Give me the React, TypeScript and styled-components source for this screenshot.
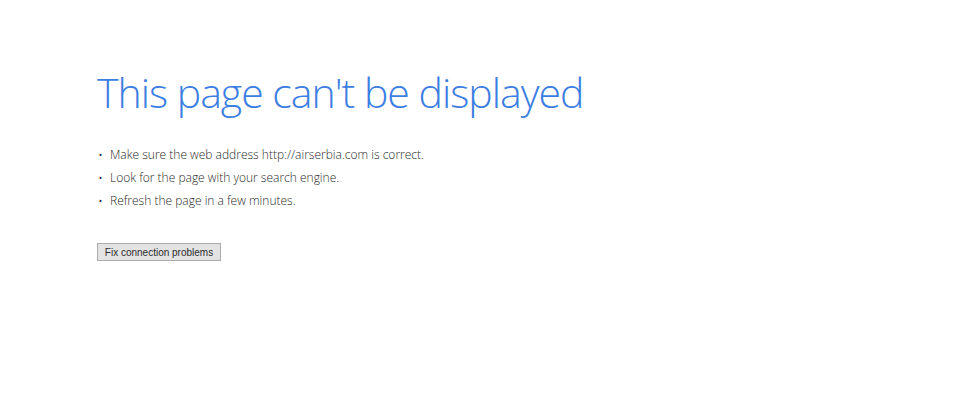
import React from "react";
import styled, { createGlobalStyle } from "styled-components";

const Global = createGlobalStyle`
  html, body { margin: 0; padding: 0; background: #ffffff; }
  body { font-family: "Open Sans", "Noto Sans", sans-serif; }
`;

const Page = styled.main`
  padding: 66px 0 0 97px;
  width: 980px;
  height: 400px;
  box-sizing: border-box;
`;

const Title = styled.h1`
  margin: 0;
  font-family: "Open Sans", sans-serif;
  font-weight: 300;
  font-size: 41px;
  line-height: 52px;
  color: #3c7ee2;
  letter-spacing: -1px;
`;

const List = styled.ul`
  list-style: none;
  margin: 29px 0 0 0;
  padding: 0;
  display: flex;
  flex-direction: column;
  gap: 7px;
`;

const Item = styled.li`
  display: flex;
  align-items: center;
  font-family: "Open Sans", sans-serif;
  font-weight: 300;
  font-size: 12px;
  line-height: 16px;
  color: #2a2a2a;
  &::before {
    content: "•";
    width: 13px;
    padding-left: 1px;
    box-sizing: border-box;
    font-size: 13px;
  }
`;

const Button = styled.button`
  display: block;
  margin-top: 34px;
  width: 124px;
  height: 18px;
  padding: 0;
  font-family: "Liberation Sans", Arial, sans-serif;
  font-size: 10px;
  color: #2b2b2b;
  background: #e3e3e3;
  border: 1px solid #acacac;
  border-radius: 0;
`;

export default function App() {
  return (
    <>
      <Global />
      <Page>
        <Title>This page can't be displayed</Title>
        <List>
          <Item>Make sure the web address http://airserbia.com is correct.</Item>
          <Item>Look for the page with your search engine.</Item>
          <Item>Refresh the page in a few minutes.</Item>
        </List>
        <Button>Fix connection problems</Button>
      </Page>
    </>
  );
}
